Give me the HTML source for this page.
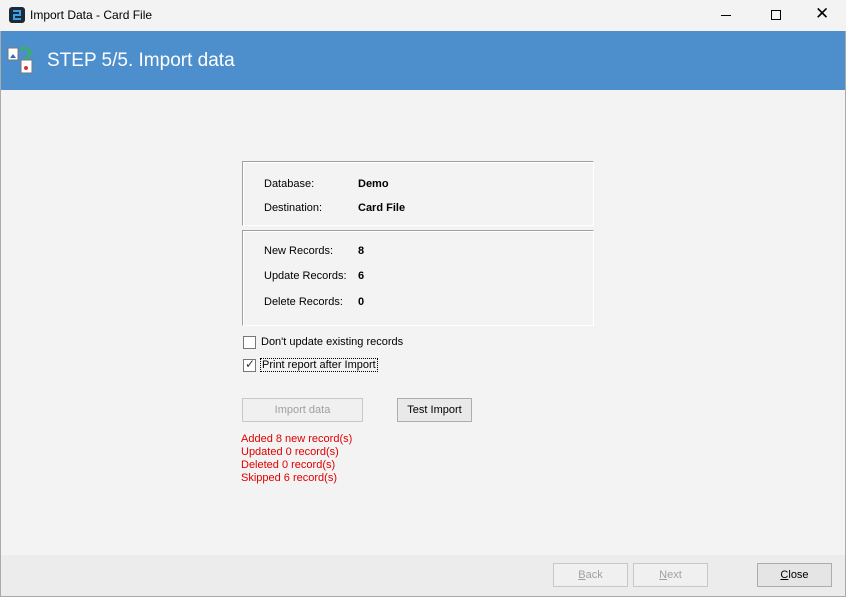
<!DOCTYPE html>
<html><head><style>
*{margin:0;padding:0;box-sizing:border-box}
body{width:846px;height:597px;background:#f3f3f3;font-family:"Liberation Sans",Tahoma,sans-serif;font-size:11px;color:#000;position:relative;overflow:hidden}
.win{position:absolute;left:0;top:0;width:846px;height:597px;border:1px solid #aaa;border-radius:6px 6px 0 0}
.title{position:absolute;left:0;top:0;width:846px;height:31px;background:#f3f3f3}
.title span{position:absolute;left:30px;top:8px;font-size:12px}
.hdr{position:absolute;left:1px;top:31px;width:844px;height:59px;background:#4d8fcc}
.hdr span{position:absolute;left:46px;top:19px;color:#fff;font-size:19px}
.abs{position:absolute;white-space:nowrap}
.grp{position:absolute;left:242px;width:352px;border-top:1px solid #a0a0a0;border-left:1px solid #a0a0a0;border-right:1px solid #fff;border-bottom:1px solid #fff;box-shadow:inset 1px 1px 0 #fff}
b{font-weight:bold}
.btn{position:absolute;height:24px;border:1px solid #adadad;background:#e5e5e5;text-align:center;line-height:22px}
.dis{color:#a0a0a0;background:#f0f0f0;border-color:#c8c8c8}
.cb{position:absolute;width:13px;height:13px;border:1px solid #777;background:#fff}
.red{color:#e00000;position:absolute;left:241px;font-size:11px;line-height:13px}
.foot{position:absolute;left:1px;top:555px;width:844px;height:41px;background:#ececec}
</style></head><body>
<div class="win"></div>
<div class="title">
<svg style="position:absolute;left:9px;top:7px" width="16" height="16"><rect x="0" y="0" width="16" height="16" rx="3" fill="#1d2a36"/><path d="M4 4h7v4H5v4h7" stroke="#3aa0e8" stroke-width="2" fill="none"/></svg>
<span>Import Data - Card File</span>
<div class="abs" style="left:771px;top:10px;width:10px;height:10px;border:1.5px solid #000"></div>
<div class="abs" style="left:815px;top:4px;font-size:17px">&#10005;</div>
</div>
<div class="abs" style="left:721px;top:15px;width:10px;height:1px;background:#000"></div>
<div class="hdr">
<svg style="position:absolute;left:6px;top:13px" width="28" height="30"><rect x="1" y="4" width="10" height="12" fill="#fff" stroke="#777"/><path d="M3 14l3-4 3 4z" fill="#2a6fc0"/><path d="M14 6a5 5 0 1 1 4 8" stroke="#3cae6a" stroke-width="3" fill="none"/><rect x="14" y="16" width="11" height="13" fill="#fff" stroke="#777"/><circle cx="19" cy="24" r="2" fill="#d33"/></svg>
<span>STEP 5/5. Import data</span>
</div>
<div class="grp" style="top:161px;height:65px"></div>
<div class="grp" style="top:230px;height:96px"></div>
<div class="abs" style="left:264px;top:178px">Database:</div><div class="abs" style="left:358px;top:178px"><b>Demo</b></div>
<div class="abs" style="left:264px;top:202px">Destination:</div><div class="abs" style="left:358px;top:202px"><b>Card File</b></div>
<div class="abs" style="left:264px;top:245px">New Records:</div><div class="abs" style="left:358px;top:245px"><b>8</b></div>
<div class="abs" style="left:264px;top:270px">Update Records:</div><div class="abs" style="left:358px;top:270px"><b>6</b></div>
<div class="abs" style="left:264px;top:296px">Delete Records:</div><div class="abs" style="left:358px;top:296px"><b>0</b></div>
<div class="cb" style="left:243px;top:336px"></div>
<div class="abs" style="left:261px;top:336px">Don't update existing records</div>
<div class="cb" style="left:243px;top:359px"></div>
<div class="abs" style="left:245px;top:357px;font-size:12px;color:#333">&#10003;</div>
<div class="abs" style="left:260px;top:358px;border:1px dotted #000;padding:0 1px">Print report after Import</div>
<div class="btn dis" style="left:242px;top:398px;width:121px">Import data</div>
<div class="btn" style="left:397px;top:398px;width:75px;background:#e9e9e9">Test Import</div>
<div class="red" style="top:433px">Added 8 new record(s)</div>
<div class="red" style="top:446px">Updated 0 record(s)</div>
<div class="red" style="top:459px">Deleted 0 record(s)</div>
<div class="red" style="top:472px">Skipped 6 record(s)</div>
<div class="foot"></div>
<div class="btn dis" style="left:553px;top:563px;width:75px"><u>B</u>ack</div>
<div class="btn dis" style="left:633px;top:563px;width:75px"><u>N</u>ext</div>
<div class="btn" style="left:757px;top:563px;width:75px"><u>C</u>lose</div>
</body></html>
